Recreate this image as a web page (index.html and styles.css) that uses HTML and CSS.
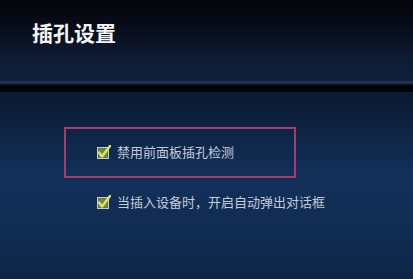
FILE: index.html
```html
<!DOCTYPE html>
<html lang="zh-CN">
<head>
    <meta charset="UTF-8">
    <meta name="viewport" content="width=device-width, initial-scale=1.0">
    <title>插孔设置</title>
    <link rel="stylesheet" href="styles.css">
</head>
<body>

    <div class="panel">
        <div class="header">
            <h2 class="title">插孔设置</h2>
        </div>
        <div class="divider"></div>
        <div class="content">
            <div class="option-box">
                <label class="option">
                    <svg class="check" width="14" height="15" viewBox="0 0 14 15">
                        <rect x="0.5" y="2.5" width="11" height="11" fill="#4d6a52" stroke="#c8d0c8"/>
                        <rect x="1.5" y="3.5" width="9" height="9" fill="#6b8a48"/>
                        <path d="M2 7.5 L5 11.5 L13 1" fill="none" stroke="#e8e060" stroke-width="2.4" stroke-linecap="round" stroke-linejoin="round"/>
                    </svg>
                    <span>禁用前面板插孔检测</span>
                </label>
            </div>
            <label class="option second">
                <svg class="check" width="14" height="15" viewBox="0 0 14 15">
                    <rect x="0.5" y="2.5" width="11" height="11" fill="#4d6a52" stroke="#c8d0c8"/>
                    <rect x="1.5" y="3.5" width="9" height="9" fill="#6b8a48"/>
                    <path d="M2 7.5 L5 11.5 L13 1" fill="none" stroke="#e8e060" stroke-width="2.4" stroke-linecap="round" stroke-linejoin="round"/>
                </svg>
                <span>当插入设备时，开启自动弹出对话框</span>
            </label>
        </div>
    </div>

</body>
</html>
```

FILE: styles.css
```css
*{
    margin: 0;
    padding: 0;
    box-sizing: border-box;
    font-family: "Noto Sans CJK SC", "Noto Sans", sans-serif;
}

body{
    width: 413px;
    height: 279px;
    overflow: hidden;
    background-color: #0f2748;
}

.panel{
    width: 413px;
    height: 279px;
    display: flex;
    flex-direction: column;
}

.header{
    height: 81px;
    padding: 19px 0 0 32px;
    background: linear-gradient(to bottom, #04050b 0%, #080d1a 35%, #0e1a33 70%, #10203c 100%);
}

.title{
    color: #f4f4f4;
    font-size: 21px;
    font-weight: 700;
    line-height: 26px;
    letter-spacing: 0;
}

.divider{
    height: 11px;
    background: linear-gradient(to bottom, #2a3452 0px, #1e2640 3px, #020407 4px, #02050a 11px);
}

.content{
    flex: 1;
    padding: 35px 0 0 64px;
    background: linear-gradient(to bottom, #0a1a30 0%, #12305a 45%, #112c52 75%, #0e2545 100%);
}

.option-box{
    width: 232px;
    height: 51px;
    border: 2px solid #a23e6c;
    padding: 15px 0 0 31px;
}

.option{
    display: flex;
    align-items: center;
    gap: 6px;
    color: #c4ccd8;
    font-size: 13px;
    line-height: 16px;
    cursor: pointer;
}

.second{
    margin: 16px 0 0 33px;
}

.check{
    display: block;
    flex-shrink: 0;
}
```
